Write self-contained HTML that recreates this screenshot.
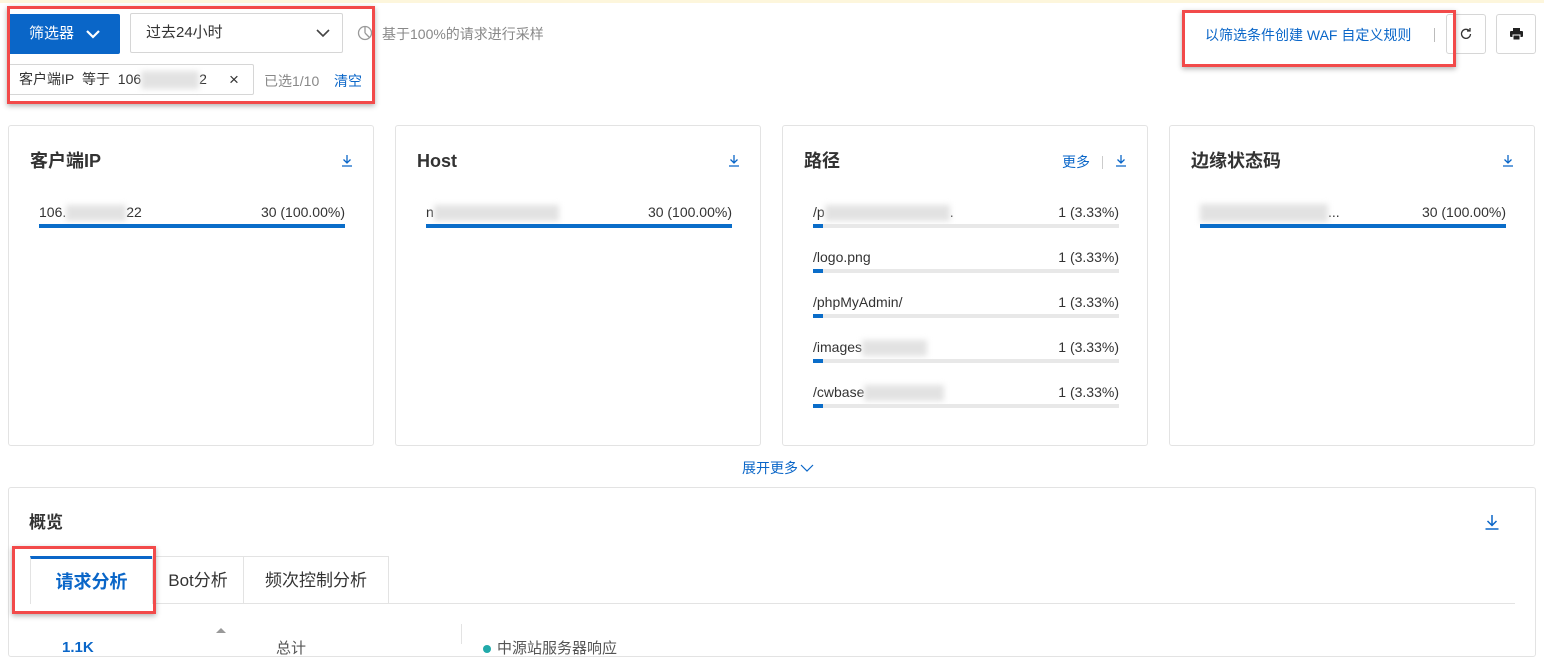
<!DOCTYPE html>
<html><head><meta charset="utf-8"><style>
*{box-sizing:border-box;margin:0;padding:0}
body{width:1544px;height:643px;overflow:hidden;background:#fff;font-family:"Liberation Sans","Noto Sans CJK SC",sans-serif;color:#333;position:relative}
.a{position:absolute;white-space:nowrap}
.card{position:absolute;top:125px;width:366px;height:321px;border:1px solid #e3e3e3;border-radius:3px;background:#fff}
.ct{position:absolute;left:21px;top:25px;font-size:18px;line-height:20px;font-weight:bold;color:#333}
.dl{position:absolute;top:28px;width:12px;height:13px}
.row{position:absolute;left:30px;width:306px;font-size:14px;color:#333}
.row .v{position:absolute;right:0;top:0}
.bar{position:absolute;left:0;top:20px;width:306px;height:4px;background:#e8e8e8}
.bar i{display:block;height:4px;background:#0a6dc9}
.blur{display:inline-block;background:#e2e2e2;filter:blur(3px);height:16px;vertical-align:middle}
.red{position:absolute;border:3px solid #f24a4a;box-shadow:0 2px 5px rgba(0,0,0,.3)}
</style></head><body>
<div class="a" style="left:0;top:0;width:1544px;height:3px;background:#fdf6dc"></div>

<div class="a" style="left:8px;top:14px;width:112px;height:40px;background:#0a66c8;border-radius:2px;color:#fff;font-size:15px;line-height:40px;padding-left:21px">筛选器
<svg style="position:absolute;left:77px;top:14px" width="16" height="12" viewBox="0 0 16 12"><path d="M2 3l6 6 6-6" stroke="#fff" stroke-width="2.2" fill="none"/></svg></div>
<div class="a" style="left:130px;top:13px;width:213px;height:40px;border:1px solid #d6d6d6;border-radius:2px;font-size:15px;line-height:38px;padding-left:15px;color:#333">过去24小时
<svg style="position:absolute;left:184px;top:13px" width="16" height="12" viewBox="0 0 16 12"><path d="M2 3l6 6 6-6" stroke="#444" stroke-width="1.6" fill="none"/></svg></div>
<svg class="a" style="left:357px;top:25px" width="16" height="16" viewBox="0 0 16 16"><circle cx="8" cy="8" r="6.5" stroke="#999" stroke-width="1.3" fill="none"/><path d="M8 8V1.5M8 8l4.5 4.5" stroke="#999" stroke-width="1.3"/></svg>
<div class="a" style="left:382px;top:24px;font-size:14px;color:#888">基于100%的请求进行采样</div>

<div class="a" style="left:8px;top:64px;width:246px;height:31px;border:1px solid #d6d6d6;border-radius:2px;font-size:14px;line-height:29px;padding-left:10px;color:#333">客户端IP&nbsp; 等于&nbsp; 106<span class="blur" style="width:58px;height:18px"></span>2
<span style="position:absolute;left:220px;top:0;font-size:17px">×</span></div>
<div class="a" style="left:264px;top:71px;font-size:14px;color:#888">已选1/10</div>
<div class="a" style="left:334px;top:71px;font-size:14px;color:#0a66c8">清空</div>

<div class="a" style="left:1205px;top:25px;font-size:14px;color:#0a66c8">以筛选条件创建 WAF 自定义规则</div>
<div class="a" style="left:1434px;top:28px;width:1px;height:14px;background:#bbb"></div>
<div class="a" style="left:1446px;top:14px;width:40px;height:40px;border:1px solid #d6d6d6;border-radius:3px"><svg style="position:absolute;left:13px;top:13px" width="12" height="12" viewBox="0 0 12 12"><path d="M9.5 3A4.5 4.5 0 1 0 10.5 6" stroke="#333" stroke-width="1.3" fill="none"/><path d="M7 3h3V0" stroke="#333" stroke-width="1.3" fill="none"/></svg></div>
<div class="a" style="left:1496px;top:14px;width:40px;height:40px;border:1px solid #d6d6d6;border-radius:3px"><svg style="position:absolute;left:12px;top:12px" width="15" height="14" viewBox="0 0 15 14"><rect x="4" y="1" width="7" height="3" fill="#222"/><rect x="1" y="4" width="13" height="6" rx="1" fill="#222"/><rect x="4" y="8" width="7" height="5" fill="#222" stroke="#fff" stroke-width="1"/></svg></div>

<div class="card" style="left:8px"><div class="ct">客户端IP</div>
<svg class="dl" style="left:332px" viewBox="0 0 12 13"><path d="M6 1v8M2.5 5.5L6 9l3.5-3.5M1 12h10" stroke="#0a66c8" stroke-width="1.3" fill="none"/></svg>
<div class="row" style="top:78px">106.<span class="blur" style="width:60px"></span>22<span class="v">30 (100.00%)</span><div class="bar"><i style="width:100%"></i></div></div></div>

<div class="card" style="left:395px"><div class="ct">Host</div>
<svg class="dl" style="left:332px" viewBox="0 0 12 13"><path d="M6 1v8M2.5 5.5L6 9l3.5-3.5M1 12h10" stroke="#0a66c8" stroke-width="1.3" fill="none"/></svg>
<div class="row" style="top:78px">n<span class="blur" style="width:125px"></span><span class="v">30 (100.00%)</span><div class="bar"><i style="width:100%"></i></div></div></div>

<div class="card" style="left:782px"><div class="ct">路径</div>
<div class="a" style="left:279px;top:26px;font-size:14px;color:#0a66c8">更多</div>
<div class="a" style="left:319px;top:30px;width:1px;height:13px;background:#ccc"></div>
<svg class="dl" style="left:332px" viewBox="0 0 12 13"><path d="M6 1v8M2.5 5.5L6 9l3.5-3.5M1 12h10" stroke="#0a66c8" stroke-width="1.3" fill="none"/></svg>
<div class="row" style="top:78px">/p<span class="blur" style="width:125px"></span>.<span class="v">1 (3.33%)</span><div class="bar"><i style="width:10px"></i></div></div>
<div class="row" style="top:123px">/logo.png<span class="v">1 (3.33%)</span><div class="bar"><i style="width:10px"></i></div></div>
<div class="row" style="top:168px">/phpMyAdmin/<span class="v">1 (3.33%)</span><div class="bar"><i style="width:10px"></i></div></div>
<div class="row" style="top:213px">/images<span class="blur" style="width:65px"></span><span class="v">1 (3.33%)</span><div class="bar"><i style="width:10px"></i></div></div>
<div class="row" style="top:258px">/cwbase<span class="blur" style="width:80px"></span><span class="v">1 (3.33%)</span><div class="bar"><i style="width:10px"></i></div></div>
</div>

<div class="card" style="left:1169px"><div class="ct">边缘状态码</div>
<svg class="dl" style="left:332px" viewBox="0 0 12 13"><path d="M6 1v8M2.5 5.5L6 9l3.5-3.5M1 12h10" stroke="#0a66c8" stroke-width="1.3" fill="none"/></svg>
<div class="row" style="top:78px"><span class="blur" style="width:128px;height:18px"></span>...<span class="v">30 (100.00%)</span><div class="bar"><i style="width:100%"></i></div></div></div>

<div class="a" style="left:742px;top:458px;font-size:14px;color:#0a66c8">展开更多<svg width="14" height="10" viewBox="0 0 14 10" style="margin-left:2px"><path d="M1 2l6 6 6-6" stroke="#0a66c8" stroke-width="1.2" fill="none"/></svg></div>

<div class="a" style="left:8px;top:487px;width:1528px;height:170px;border:1px solid #e3e3e3;border-radius:3px"></div>
<div class="a" style="left:29px;top:513px;font-size:17px;line-height:20px;font-weight:bold;color:#333">概览</div>
<svg class="a" style="left:1484px;top:514px" width="16" height="16" viewBox="0 0 16 16"><path d="M8 1v10M3.5 7L8 11.5 12.5 7M1.5 15h13" stroke="#0a66c8" stroke-width="1.5" fill="none"/></svg>
<div class="a" style="left:30px;top:603px;width:1485px;height:1px;background:#e3e3e3"></div>
<div class="a" style="left:30px;top:556px;width:122px;height:48px;border-left:1px solid #e3e3e3;border-top:3px solid #0a66c8;background:#fff;font-size:18px;font-weight:bold;color:#0a66c8;text-align:center;line-height:46px">请求分析</div>
<div class="a" style="left:152px;top:556px;width:91px;height:47px;border-top:1px solid #e3e3e3;border-left:1px solid #e3e3e3;font-size:17px;text-align:center;line-height:48px">Bot分析</div>
<div class="a" style="left:243px;top:556px;width:146px;height:47px;border:1px solid #e3e3e3;border-bottom:none;font-size:17px;text-align:center;line-height:48px">频次控制分析</div>
<div class="a" style="left:461px;top:624px;width:1px;height:20px;background:#e3e3e3"></div>
<svg class="a" style="left:216px;top:627px" width="10" height="6"><path d="M0 6L5 1l5 5z" fill="#999"/></svg>
<div class="a" style="left:276px;top:637px;font-size:15px;color:#555">总计</div>
<div class="a" style="left:483px;top:637px;font-size:15px;color:#555"><span style="display:inline-block;width:8px;height:8px;border-radius:50%;background:#2aa;margin-right:6px"></span>中源站服务器响应</div>
<div class="a" style="left:62px;top:639px;font-size:15px;color:#0a66c8;font-weight:bold">1.1K</div>

<div class="red" style="left:7px;top:6px;width:368px;height:98px"></div>
<div class="red" style="left:1182px;top:10px;width:274px;height:57px"></div>
<div class="red" style="left:12px;top:546px;width:144px;height:68px"></div>
</body></html>
